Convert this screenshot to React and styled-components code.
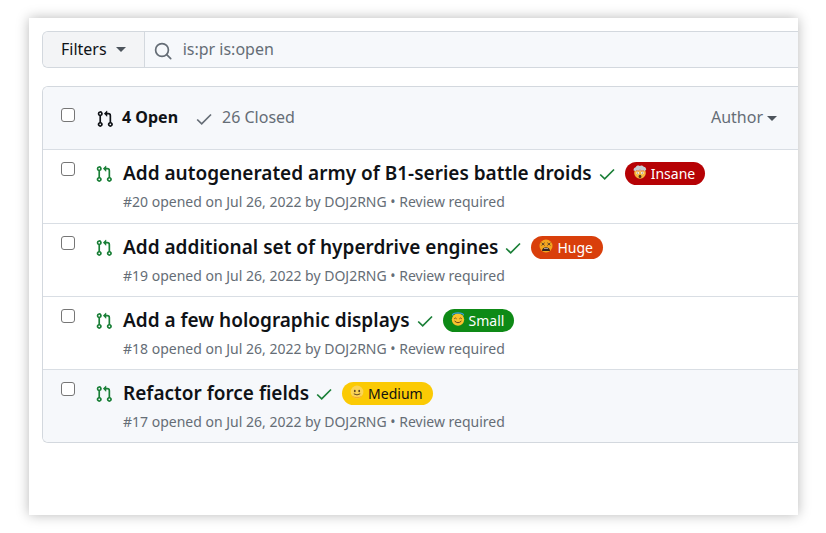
import React from "react";
import styled, { createGlobalStyle } from "styled-components";

const GlobalStyle = createGlobalStyle`
  *, *::before, *::after { box-sizing: border-box; }
  body {
    margin: 0;
    background: #fff;
    color: #0f1216;
    font-family: "Noto Sans", sans-serif;
    font-size: 16px;
  }
  button, input { font: inherit; color: inherit; }
`;

const Page = styled.div`
  display: flex;
  min-height: 100vh;
  padding: 18px 28px 18px 29px;
`;

const Window = styled.main`
  flex: 1;
  min-width: 0;
  padding: 13px 0 13px 13px;
  background: #fff;
  box-shadow: 0 0 12px rgba(0, 0, 0, 0.28);
`;

const FilterBar = styled.form`
  display: flex;
  height: 37px;
  margin-bottom: 18px;
  border: 1px solid #d3d8de;
  border-right: 0;
  border-radius: 6px 0 0 6px;
  background: #f6f8fb;
  overflow: hidden;
`;

const FilterButton = styled.button`
  display: flex;
  align-items: center;
  gap: 9px;
  padding: 0 18px 2px;
  border: 0;
  border-right: 1px solid #d3d8de;
  background: #f3f4f6;
  line-height: 24px;
`;

const SearchLabel = styled.label`
  display: flex;
  flex: 1;
  align-items: center;
  gap: 11px;
  padding: 0 0 2px 9px;
  color: #656d76;
  svg { margin-top: 4px; }
`;

const SearchInput = styled.input`
  flex: 1;
  min-width: 0;
  padding: 0;
  border: 0;
  outline: 0;
  background: transparent;
  line-height: 24px;
`;

const Panel = styled.section`
  border: 1px solid #d3d8de;
  border-right: 0;
  border-radius: 6px 0 0 6px;
  overflow: hidden;
`;

const PanelHeader = styled.header`
  display: flex;
  align-items: center;
  height: 62px;
  padding: 0 21px 2px 18px;
  background: #f6f8fb;
`;

const Check = styled.input`
  appearance: none;
  flex: none;
  width: 14px;
  height: 14px;
  margin: 0;
  border: 1px solid #767676;
  border-radius: 3px;
  background: #fff;
  &:checked { background: #0969da; }
`;

const HeaderCheck = styled(Check)`
  margin: 0 21px 4px 0;
`;

const StateLink = styled.a`
  display: flex;
  align-items: center;
  gap: 8px;
  margin-right: 17px;
  color: ${(p) => (p.$active ? "#0f1216" : "#656d76")};
  font-weight: ${(p) => (p.$active ? 700 : 400)};
  line-height: 24px;
  text-decoration: none;
  svg { margin-top: 4px; }
  & + & { gap: 9px; }
`;

const AuthorButton = styled.button`
  display: flex;
  align-items: center;
  gap: 4px;
  margin-left: auto;
  padding: 0;
  border: 0;
  background: none;
  color: #656d76;
  line-height: 24px;
`;

const Caret = styled.span`
  margin-top: 2px;
  border: 5px solid transparent;
  border-top-color: #4d545c;
  border-bottom: 0;
`;

const List = styled.ul`
  margin: 0;
  padding: 0;
  list-style: none;
`;

const Row = styled.li`
  display: flex;
  align-items: flex-start;
  padding: 12px 18px 11px;
  border-top: 1px solid #d9dee4;
  background: ${(p) => (p.$active ? "#f6f8fb" : "#fff")};
  > svg { margin: 3px 10px 0 20px; }
  &:first-child { padding-bottom: 12px; }
`;

const RowBody = styled.div`
  min-width: 0;
`;

const TitleLine = styled.div`
  display: flex;
  align-items: center;
  height: 23px;
  > svg { margin: 0 9px 0 6px; }
`;

const Title = styled.a`
  color: #0f1216;
  font-size: 19px;
  font-weight: 600;
  line-height: 23px;
  white-space: nowrap;
  text-decoration: none;
`;

const Label = styled.a`
  display: flex;
  align-items: center;
  gap: 4px;
  height: 23px;
  padding: 0 10px 1px 8px;
  border-radius: 12px;
  background: ${(p) => p.$bg};
  color: ${(p) => p.$fg};
  font-size: 14px;
  text-decoration: none;
  svg { margin-bottom: 2px; }
`;

const Meta = styled.p`
  margin: 7px 0 0;
  color: #656d76;
  font-size: 14px;
  line-height: 19px;
`;

const PullIcon = ({ color = "currentColor" }) => (
  <svg width="18" height="18" viewBox="0 0 16 16" fill={color} aria-hidden="true">
    <path d="M1.5 3.25a2.25 2.25 0 1 1 3 2.122v5.256a2.251 2.251 0 1 1-1.5 0V5.372A2.25 2.25 0 0 1 1.5 3.25Zm5.677-.177L9.573.677A.25.25 0 0 1 10 .854V2.5h1A2.5 2.5 0 0 1 13.5 5v5.628a2.251 2.251 0 1 1-1.5 0V5a1 1 0 0 0-1-1h-1v1.646a.25.25 0 0 1-.427.177L7.177 3.427a.25.25 0 0 1 0-.354ZM3.75 2.5a.75.75 0 1 0 0 1.5.75.75 0 0 0 0-1.5Zm0 9.5a.75.75 0 1 0 0 1.5.75.75 0 0 0 0-1.5Zm8.25.75a.75.75 0 1 0 1.5 0 .75.75 0 0 0-1.5 0Z" />
  </svg>
);

const CheckIcon = ({ color = "currentColor" }) => (
  <svg width="18" height="18" viewBox="0 0 18 18" fill="none" stroke={color} strokeWidth="1.7" aria-hidden="true">
    <path d="M2.2 9.5 6.7 13.9 16 4.5" />
  </svg>
);

const SearchIcon = () => (
  <svg width="18" height="18" viewBox="0 0 18 18" fill="none" stroke="currentColor" strokeWidth="1.7" strokeLinecap="round" aria-hidden="true">
    <circle cx="8" cy="8" r="6.4" />
    <path d="m12.7 12.7 4 4" />
  </svg>
);

const FACES = {
  insane: (
    <>
      <circle cx="7" cy="8" r="5.8" fill="#f6b73c" />
      <path d="M.6 5.4C.3 3.4 2 2.6 2.7 2.3 3.2.6 5.4.2 6.6 1c1.6-1.2 3.6-.5 4 .8 1.7.1 2.8 1.6 2.5 3.1l-2.4 1.4-1.6-1.2-2 1.4-2-1.5-1.9 1.3Z" fill="#c5cdd2" />
      <path d="m3 5.2 2 1.2 2-1.6 2 1.5 2-1" fill="none" stroke="#e5735d" strokeWidth=".8" />
      <circle cx="4.7" cy="8" r="1.3" fill="#fff" />
      <circle cx="9.3" cy="8" r="1.3" fill="#fff" />
      <circle cx="4.7" cy="8" r=".6" fill="#51321b" />
      <circle cx="9.3" cy="8" r=".6" fill="#51321b" />
      <ellipse cx="7" cy="11.4" rx="1.4" ry="1.7" fill="#56351f" />
    </>
  ),
  huge: (
    <>
      <circle cx="7" cy="7" r="6.5" fill="#f3a51f" />
      <path d="M2.6 3.8 5.6 6.4M5.6 3.8 2.6 6.4M8.4 3.8l3 2.6M11.4 3.8l-3 2.6" stroke="#5d4328" strokeWidth="1" />
      <path d="M3 12c.1-2.6 1.7-3.8 4-3.8s3.9 1.2 4 3.8Z" fill="#33241f" />
      <path d="M5 9.4h4" stroke="#fff" strokeWidth=".6" />
    </>
  ),
  small: (
    <>
      <circle cx="7" cy="7.6" r="6.2" fill="#f9c22e" />
      <path d="M1.7 3.4C.9 1.9 4 .8 7 .8s6.1 1.1 5.3 2.6" fill="none" stroke="#3d9ddd" strokeWidth="1.2" />
      <path d="M3.2 6.8q1.2-1.6 2.4 0M8.4 6.8q1.2-1.6 2.4 0" fill="none" stroke="#684119" strokeWidth=".9" />
      <path d="M3.6 9q3.4 3.4 6.8 0" fill="none" stroke="#684119" strokeWidth="1" />
    </>
  ),
  medium: (
    <>
      <circle cx="7" cy="7" r="6.4" fill="#fbd455" />
      <path d="M1.6 10.4a6.4 6.4 0 0 0 10.8 0q-5.4 3-10.8 0Z" fill="#f3a92c" />
      <ellipse cx="4.8" cy="6" rx=".9" ry="1.2" fill="#5d4522" />
      <ellipse cx="9.2" cy="6" rx=".9" ry="1.2" fill="#5d4522" />
      <path d="M3.8 8.8q3.2 2.2 6.4 0" fill="none" stroke="#5d4522" strokeWidth="1" />
    </>
  ),
};

const Face = ({ kind }) => (
  <svg width="14" height="14" viewBox="0 0 14 14" aria-hidden="true">{FACES[kind]}</svg>
);

const PULLS = [
  { id: 20, title: "Add autogenerated army of B1-series battle droids", label: "Insane", kind: "insane", bg: "#b60205", fg: "#fff" },
  { id: 19, title: "Add additional set of hyperdrive engines", label: "Huge", kind: "huge", bg: "#d93f0b", fg: "#fff" },
  { id: 18, title: "Add a few holographic displays", label: "Small", kind: "small", bg: "#0e8a16", fg: "#fff" },
  { id: 17, title: "Refactor force fields", label: "Medium", kind: "medium", bg: "#fbca04", fg: "#111", active: true },
];

export default function App() {
  return (
    <>
      <GlobalStyle />
      <Page>
        <Window>
          <FilterBar onSubmit={(e) => e.preventDefault()}>
            <FilterButton type="button">
              Filters <Caret />
            </FilterButton>
            <SearchLabel>
              <SearchIcon />
              <SearchInput aria-label="Search pull requests" defaultValue="is:pr is:open" />
            </SearchLabel>
          </FilterBar>
          <Panel>
            <PanelHeader>
              <HeaderCheck type="checkbox" aria-label="Select all pull requests" />
              <StateLink href="#open" $active>
                <PullIcon /> 4 Open
              </StateLink>
              <StateLink href="#closed">
                <CheckIcon /> 26 Closed
              </StateLink>
              <AuthorButton type="button">
                Author <Caret />
              </AuthorButton>
            </PanelHeader>
            <List>
              {PULLS.map((pull) => (
                <Row key={pull.id} $active={pull.active}>
                  <Check type="checkbox" aria-label={`Select ${pull.title}`} />
                  <PullIcon color="#1a7f37" />
                  <RowBody>
                    <TitleLine>
                      <Title href={`#${pull.id}`}>{pull.title}</Title>
                      <CheckIcon color="#1a7f37" />
                      <Label href={`#${pull.kind}`} $bg={pull.bg} $fg={pull.fg}>
                        <Face kind={pull.kind} />
                        {pull.label}
                      </Label>
                    </TitleLine>
                    <Meta>#{pull.id} opened on Jul 26, 2022 by DOJ2RNG • Review required</Meta>
                  </RowBody>
                </Row>
              ))}
            </List>
          </Panel>
        </Window>
      </Page>
    </>
  );
}
